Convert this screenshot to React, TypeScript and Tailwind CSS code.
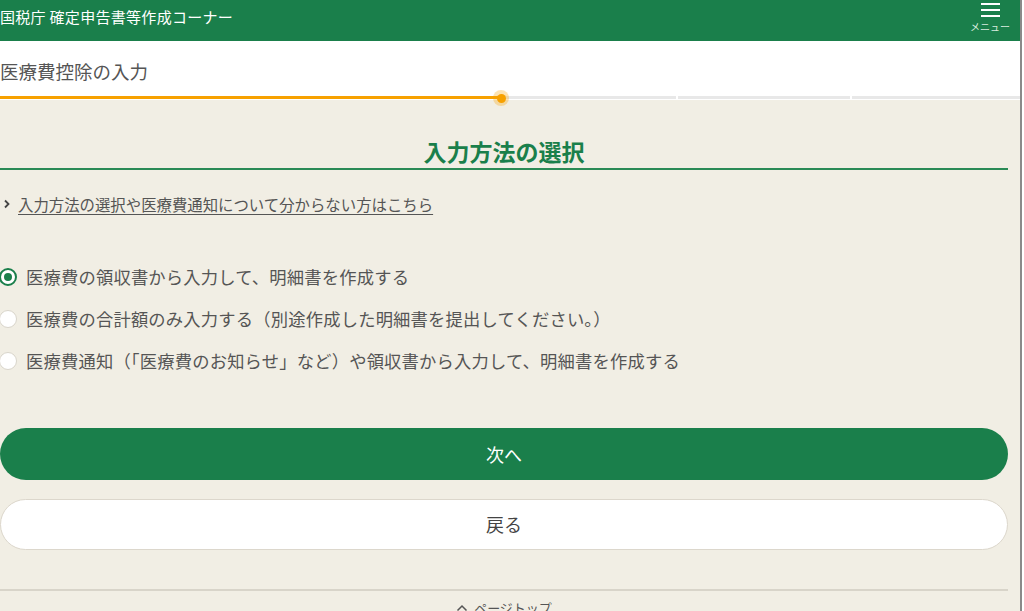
import React, { useState } from "react"

const font = { fontFamily: '"Noto Sans CJK JP", "Noto Sans", sans-serif' }

const options = [
  "医療費の領収書から入力して、明細書を作成する",
  "医療費の合計額のみ入力する（別途作成した明細書を提出してください。）",
  "医療費通知（「医療費のお知らせ」など）や領収書から入力して、明細書を作成する",
]

function Radio({ checked }: { checked: boolean }) {
  return (
    <span
      className={
        checked
          ? "flex h-[18px] w-[18px] shrink-0 items-center justify-center rounded-full border-2 border-[#1a7f4b] bg-white"
          : "flex h-[18px] w-[18px] shrink-0 items-center justify-center rounded-full border border-[#d9d5cb] bg-white"
      }
    >
      {checked && <span className="h-[8px] w-[8px] rounded-full bg-[#1a7f4b]" />}
    </span>
  )
}

export default function App() {
  const [selected, setSelected] = useState(0)

  return (
    <div className="h-[611px] w-[1024px] overflow-hidden bg-white" style={font}>
      <div className="h-[611px] w-[1022px] border-r-2 border-[#8a8a8a] bg-[#f1eee4]">
        {/* header */}
        <header className="flex h-[41px] items-start justify-between bg-[#1a7f4b] text-white">
          <div className="pt-[6px] text-[15px] leading-[22px] tracking-[0.3px]">
            国税庁 確定申告書等作成コーナー
          </div>
          <button className="mr-[10px] flex flex-col items-center pt-[2px]">
            <span className="flex flex-col gap-[4px] pt-[1px]">
              <span className="block h-[2px] w-[19px] bg-white" />
              <span className="block h-[2px] w-[19px] bg-white" />
              <span className="block h-[2px] w-[19px] bg-white" />
            </span>
            <span className="mt-[3px] text-[10px] leading-[14px] text-[#d8ecdf]">メニュー</span>
          </button>
        </header>

        {/* page title */}
        <div className="flex h-[55px] items-center bg-white pt-[6px] text-[18.5px] text-[#555]">
          医療費控除の入力
        </div>

        {/* progress */}
        <div className="relative flex h-[4px] bg-white">
          <div className="h-[3px] w-[676px] bg-[#e8e8e8]" />
          <div className="ml-[2px] h-[3px] w-[172px] bg-[#e8e8e8]" />
          <div className="ml-[2px] h-[3px] flex-1 bg-[#e8e8e8]" />
          <div className="absolute left-0 top-0 h-[3px] w-[500px] bg-[#f7a100]" />
          <div className="absolute left-[493px] top-[-6px] flex h-[16px] w-[16px] items-center justify-center rounded-full bg-[#f7a100]/30">
            <div className="h-[9px] w-[9px] rounded-full bg-[#f7a100]" />
          </div>
        </div>

        {/* main */}
        <main className="w-[1008px]">
          <h2 className="mt-[36px] border-b-2 border-[#2a8a55] pb-[2px] text-center text-[23px] font-bold leading-[30px] text-[#1a7f4b]">
            入力方法の選択
          </h2>

          <a className="mt-[23px] flex items-center text-[15.4px] leading-[22px] text-[#555]">
            <svg width="8" height="10" viewBox="0 0 8 10" className="ml-[3px] mr-[7px]">
              <path d="M2 1.5 L5.5 5 L2 8.5" fill="none" stroke="#444" strokeWidth="1.8" />
            </svg>
            <span className="underline underline-offset-[3px]">
              入力方法の選択や医療費通知について分からない方はこちら
            </span>
          </a>

          <div className="mt-[50px] flex flex-col gap-[18px]">
            {options.map((o, i) => (
              <label
                key={i}
                className="-ml-[1px] flex h-[24px] cursor-pointer items-center gap-[9px] text-[17.3px] tracking-[0.2px] text-[#555]"
                onClick={() => setSelected(i)}
              >
                <Radio checked={selected === i} />
                <span>{o}</span>
              </label>
            ))}
          </div>

          <button className="mt-[55px] flex h-[52px] w-full items-center justify-center rounded-full bg-[#1a7f4b] text-[18px] text-white">
            次へ
          </button>
          <button className="mt-[19px] flex h-[51px] w-full items-center justify-center rounded-full border border-[#dcd7cc] bg-white text-[18px] text-[#444]">
            戻る
          </button>

          <div className="mt-[39px] border-t-2 border-[#d8d4c9]" />
          <div className="mt-[8px] flex items-center justify-center gap-[6px] text-[13px] leading-[18px] text-[#555]">
            <svg width="12" height="8" viewBox="0 0 12 8">
              <path d="M1.5 6.5 L6 2 L10.5 6.5" fill="none" stroke="#555" strokeWidth="1.5" />
            </svg>
            ページトップ
          </div>
        </main>
      </div>
    </div>
  )
}
